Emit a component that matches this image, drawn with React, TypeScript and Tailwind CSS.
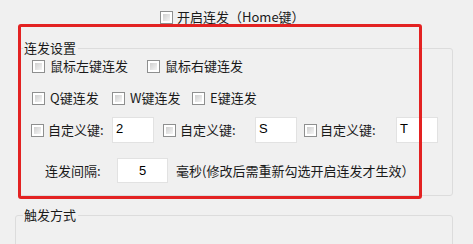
import React from "react";

function Box() {
  return (
    <span className="inline-flex w-[13px] h-[13px] shrink-0 border border-[#8e8f8f] bg-white p-[2px]">
      <span className="block w-full h-full bg-linear-to-br from-[#cfcfcf] to-[#f5f5f5]" />
    </span>
  );
}

function Check({ label, w }: { label: string; w?: string }) {
  return (
    <div className={`flex items-center ${w ?? ""}`}>
      <Box />
      <span className="ml-[5px] whitespace-nowrap">{label}</span>
    </div>
  );
}

function Field({ value, w, center }: { value: string; w: string; center?: boolean }) {
  return (
    <div
      className={`${w} bg-white border border-[#e2e2e2] font-['Liberation_Sans',sans-serif] text-[13px] leading-[15px] text-black flex ${
        center ? "items-center justify-center" : "items-start pl-[3px] pt-[3px]"
      }`}
    >
      {value}
    </div>
  );
}

export default function App() {
  return (
    <div className="relative w-[473px] h-[244px] overflow-hidden bg-[#f0f0f0] text-[13px] leading-[18px] text-[#1a1a1a] font-['Noto_Sans_CJK_SC','Noto_Sans',sans-serif]">
      {/* top checkbox */}
      <div className="flex items-center h-[18px] mt-[8px] pl-[160px]">
        <Box />
        <span className="ml-[4px] whitespace-nowrap">开启连发（Home键）</span>
      </div>

      {/* group 1 */}
      <fieldset className="ml-[19px] mt-[13px] w-[434px] border border-[#dcdcdc] rounded-[3px] p-0 pb-[12px]">
        <legend className="ml-[3px] pl-[1px] pr-[2px] leading-[18px]">连发设置</legend>

        <div className="flex items-center h-[18px] pl-[12px]">
          <Check label="鼠标左键连发" w="w-[115px]" />
          <Check label="鼠标右键连发" />
        </div>

        <div className="flex items-center h-[18px] mt-[14px] pl-[12px]">
          <Check label="Q键连发" w="w-[80px]" />
          <Check label="W键连发" w="w-[80px]" />
          <Check label="E键连发" />
        </div>

        <div className="flex items-center h-[26px] mt-[10px] pl-[11px]">
          <div className="flex items-center">
            <Box />
            <span className="ml-[4px] w-[64px] whitespace-nowrap">自定义键:</span>
            <Field value="2" w="w-[42px] h-[26px]" />
          </div>
          <div className="flex items-center ml-[9px]">
            <Box />
            <span className="ml-[4px] w-[75px] whitespace-nowrap">自定义键:</span>
            <Field value="S" w="w-[42px] h-[26px]" />
          </div>
          <div className="flex items-center ml-[7px]">
            <Box />
            <span className="ml-[3px] w-[76px] whitespace-nowrap">自定义键:</span>
            <Field value="T" w="w-[42px] h-[26px]" />
          </div>
        </div>

        <div className="flex items-center h-[25px] mt-[15px] pl-[25px]">
          <span className="w-[72px] whitespace-nowrap">连发间隔:</span>
          <Field value="5" w="w-[51px] h-[25px]" center />
          <span className="ml-[8px] whitespace-nowrap">毫秒(修改后需重新勾选开启连发才生效）</span>
        </div>
      </fieldset>

      {/* group 2 */}
      <fieldset className="ml-[15px] mt-[10px] w-[438px] h-[60px] border border-[#dcdcdc] rounded-[3px] p-0">
        <legend className="ml-[7px] pl-[1px] pr-[2px] leading-[18px]">触发方式</legend>
      </fieldset>

      {/* red annotation frame */}
      <div className="absolute left-[18px] top-[24px] w-[404px] h-[175px] border-[3px] border-[#e32222] rounded-[3px] pointer-events-none" />
    </div>
  );
}
